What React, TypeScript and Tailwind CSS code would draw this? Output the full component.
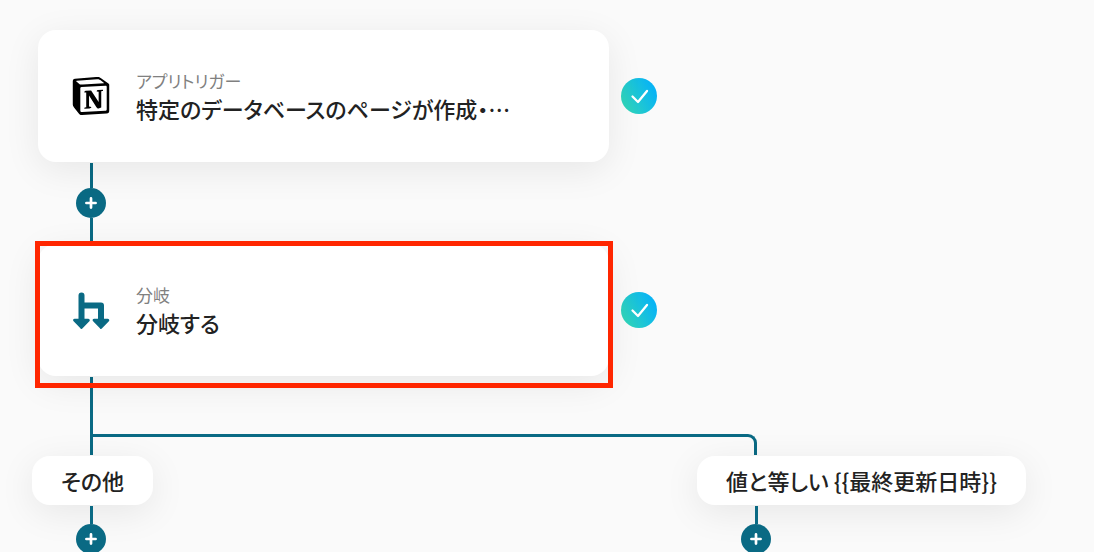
import React from "react";
import { SiNotion } from "react-icons/si";

interface StepCardProps {
    icon: React.ReactNode;
    label: string;
    title: string;
    selected?: boolean;
}

function BranchIcon() {
    return (
        <svg className="h-[37px] w-[37px]" viewBox="0 0 37 37" fill="#0a6a84" stroke="#0a6a84" aria-hidden="true">
            <path d="M8.500 3.600V28M8.500 13.600h19.500V28" fill="none" strokeWidth="6" strokeLinecap="round" strokeLinejoin="round" />
            <path d="M1.700 28.200h13.600L8.500 35.300z" strokeWidth="3" strokeLinejoin="round" />
            <path d="M21.200 28.200h13.600L28 35.300z" strokeWidth="3" strokeLinejoin="round" />
        </svg>
    );
}

function StatusCheck({ id }: { id: string }) {
    return (
        <svg className="h-9 w-9 shrink-0" viewBox="0 0 36 36" role="img" aria-label="完了">
            <defs>
                <linearGradient id={id} x1="0.1" y1="0.7" x2="0.9" y2="0.3">
                    <stop offset="0" stopColor="#2ed3bd" />
                    <stop offset="1" stopColor="#08b4f4" />
                </linearGradient>
            </defs>
            <circle cx="18" cy="18" r="18" fill={`url(#${id})`} />
            <path d="M11.500 18.500l5.500 5.500 9-11" fill="none" stroke="#fff" strokeWidth="2.300" strokeLinecap="round" strokeLinejoin="round" />
        </svg>
    );
}

function StepCard({ icon, label, title, selected }: StepCardProps) {
    return (
        <div className="ml-1.5 flex items-center gap-3">
            <div className="relative w-[571px] rounded-[18px] bg-white shadow-[0_8px_36px_rgba(0,0,0,0.08)]">
                <div className="flex h-[132px] items-center gap-6 px-8">
                    <div className="flex w-[42px] shrink-0 justify-center">{icon}</div>
                    <div className="min-w-0 flex-1">
                        <p className="text-[17px] leading-6 font-normal text-[#808080]">{label}</p>
                        <h2 className="truncate text-[22px] leading-[30px] font-medium text-[#222]">{title}</h2>
                    </div>
                </div>
                {selected && (
                    <div className="pointer-events-none absolute -top-[3px] -right-1 -bottom-3 -left-[3px] border-5 border-[#ff2600]" />
                )}
            </div>
            <StatusCheck id={selected ? "check-branch" : "check-trigger"} />
        </div>
    );
}

function AddButton() {
    return (
        <button
            type="button"
            aria-label="追加"
            className="flex h-[30px] w-[30px] shrink-0 items-center justify-center rounded-full bg-[#0a6a84]"
        >
            <svg className="h-3 w-3" viewBox="0 0 12 12" stroke="#fff" strokeWidth="2.700" strokeLinecap="round">
                <path d="M6 1.400v9.200M1.400 6h9.200" />
            </svg>
        </button>
    );
}

function BranchPill({ children }: { children: React.ReactNode }) {
    return (
        <div className="flex flex-col items-start">
            <div className="rounded-[18px] bg-white px-[29px] py-2 text-[22px] leading-[33px] font-medium whitespace-nowrap text-[#222] shadow-[0_8px_36px_rgba(0,0,0,0.08)]">
                {children}
            </div>
            <div className="ml-11 flex w-[30px] flex-col items-center">
                <div className="mt-px h-[18px] w-[3px] bg-[#0a6a84]" />
                <AddButton />
            </div>
        </div>
    );
}

export default function App() {
    return (
        <main className="h-screen overflow-hidden bg-[#fafafa] pt-[30px] pl-8 font-['Noto_Sans_CJK_JP',sans-serif] [font-feature-settings:'palt']">
            <StepCard
                icon={<SiNotion className="h-[38px] w-[38px] shrink-0 text-black" />}
                label="アプリトリガー"
                title="特定のデータベースのページが作成・…"
            />
            <div className="ml-11 flex w-[30px] flex-col items-center pt-px">
                <div className="h-[25px] w-[3px] bg-[#0a6a84]" />
                <AddButton />
                <div className="h-[26px] w-[3px] bg-[#0a6a84]" />
            </div>
            <StepCard icon={<BranchIcon />} label="分岐" title="分岐する" selected />

            {/* Branch lines */}
            <div className="mt-px ml-[58px] h-[57px] w-[3px] bg-[#0a6a84]" />
            <div className="mb-px ml-[58px] h-[21px] w-[667px] rounded-tr-[9px] border-t-3 border-r-3 border-l-3 border-[#0a6a84]" />
            <div className="grid grid-cols-[665px_auto] items-start justify-start">
                <BranchPill>その他</BranchPill>
                <BranchPill>{"値と等しい {{最終更新日時}}"}</BranchPill>
            </div>
        </main>
    );
}
